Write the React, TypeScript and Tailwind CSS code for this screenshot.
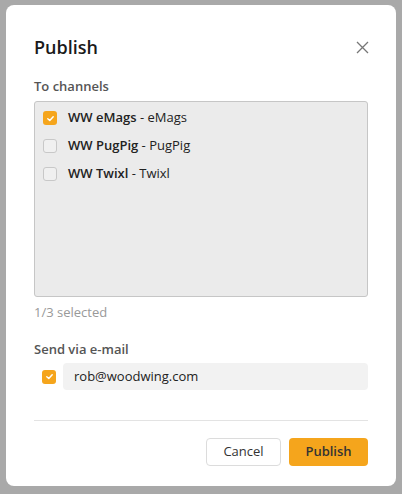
import React from "react";

function Check({ checked }: { checked: boolean }) {
  return checked ? (
    <span className="flex h-[14px] w-[14px] shrink-0 items-center justify-center rounded-[3px] bg-[#f5a51c]">
      <svg width="9" height="9" viewBox="0 0 10 10" fill="none">
        <path d="M2 5.2 L4.2 7.2 L8 3" stroke="white" strokeWidth="1.6" strokeLinecap="round" strokeLinejoin="round" />
      </svg>
    </span>
  ) : (
    <span className="h-[14px] w-[14px] shrink-0 rounded-[3px] border border-[#c8c8c8] bg-[#f0f0f0]" />
  );
}

export default function App() {
  const channels = [
    { bold: "WW eMags", rest: " - eMags", checked: true },
    { bold: "WW PugPig", rest: " - PugPig", checked: false },
    { bold: "WW Twixl", rest: " - Twixl", checked: false },
  ];
  return (
    <div
      className="h-[494px] w-[402px] bg-[#a9a9a9] pl-[6px] pt-[5px]"
      style={{ fontFamily: '"Open Sans", "Noto Sans", sans-serif' }}
    >
      <div className="flex h-[481px] w-[390px] flex-col rounded-[8px] bg-white px-[28px]">
        <div className="flex h-[73px] items-center justify-between pt-[11px]">
          <span className="text-[18px] font-semibold text-[#1a1a1a]">Publish</span>
          <svg width="13" height="13" viewBox="0 0 13 13" className="mr-[-1px]">
            <path d="M1 1 L12 12 M12 1 L1 12" stroke="#777" strokeWidth="1.3" />
          </svg>
        </div>
        <div className="text-[13px] font-semibold leading-[17px] text-[#555]">To channels</div>
        <div className="mt-[6px] h-[196px] rounded-[3px] border border-[#c6c6c6] bg-[#ebebeb] pt-[2px]">
          {channels.map((c) => (
            <div key={c.bold} className="flex h-[28px] items-center gap-[11px] pl-[8px]">
              <Check checked={c.checked} />
              <span className="text-[13px] text-[#222]">
                <span className="font-semibold">{c.bold}</span>
                {c.rest}
              </span>
            </div>
          ))}
        </div>
        <div className="mt-[7px] text-[13px] leading-[17px] text-[#999]">1/3 selected</div>
        <div className="mt-[20px] text-[13px] font-semibold leading-[17px] text-[#555]">Send via e-mail</div>
        <div className="mt-[5px] flex items-center gap-[7px] pl-[8px]">
          <Check checked={true} />
          <div className="flex h-[27px] flex-1 items-center rounded-[4px] bg-[#f2f2f2] pl-[11px] text-[13px] text-[#222]">
            rob@woodwing.com
          </div>
        </div>
        <div className="mt-[30px] h-px bg-[#e3e3e3]" />
        <div className="mt-[17px] flex justify-end gap-[8px]">
          <button className="h-[28px] w-[75px] rounded-[4px] border border-[#dcdcdc] bg-white text-[13px] text-[#333]">
            Cancel
          </button>
          <button className="h-[28px] w-[79px] rounded-[4px] bg-[#f5a51c] text-[13px] font-semibold text-[#333]">
            Publish
          </button>
        </div>
      </div>
    </div>
  );
}
